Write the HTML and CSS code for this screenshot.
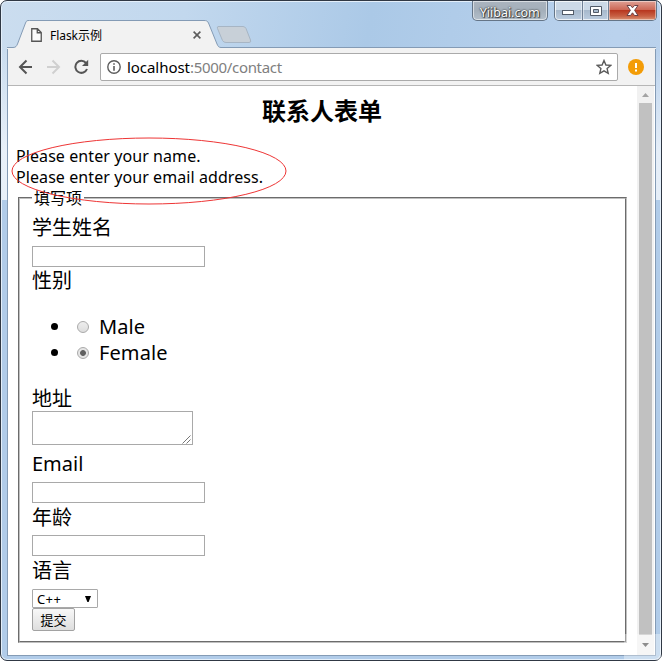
FILE: index.html
```html
<!DOCTYPE html>
<html lang="zh">
<head>
<meta charset="utf-8">
<title>Flask示例</title>
<link rel="stylesheet" href="styles.css">
</head>
<body>
<div class="window">
  <header class="titlebar">
    <svg class="tab-shape" width="649" height="30" viewBox="0 0 649 30">
      <path d="M0 29.500V28.500H6C9 28.500 9.500 27 10.500 25L18.500 4C19.500 1.500 20 1.500 22.500 1.500H197C199.500 1.500 200.500 2 201.500 4L210 25C211 27.500 212 28.500 214 28.500H649V30H0Z" fill="#f2f2f2"/>
      <path d="M0 28.500H6C9 28.500 9.500 27 10.500 25L18.500 4C19.500 1.500 20 1.500 22.500 1.500H197C199.500 1.500 200.500 2 201.500 4L210 25C211 27.500 212 28.500 214 28.500H649" fill="none" stroke="#849bb5"/>
      <path d="M211 7.500H236Q238 7.500 239 9.500L243.500 21Q244.500 23.500 242 23.500H219Q216.500 23.500 215.500 21.500L210.500 9.500Q210 7.500 211 7.500Z" fill="#c8d0d8" stroke="#a7b5c4"/>
    </svg>
    <div class="tab">
      <svg class="page-icon" width="11" height="14" viewBox="0 0 11 14"><path d="M.75.75H6.500L10.250 4.500V13.250H.75ZM6.250.75V4.750H10.250" fill="#fafafa" stroke="#555" stroke-width="1.300"/></svg>
      <span class="tab-title">Flask示例</span>
      <svg class="tab-close" width="8" height="8" viewBox="0 0 8 8"><path d="M.6.6 7.400 7.400M7.400.6.6 7.400" stroke="#5c5c5c" stroke-width="1.600"/></svg>
    </div>
    <div class="caption brand">Yiibai.com</div>
    <div class="caption controls">
      <span class="min"><svg width="14" height="7" viewBox="0 0 14 7"><rect x="1.500" y="1.500" width="11" height="4" fill="#fff" stroke="#525b68"/></svg></span>
      <span class="max"><svg width="12" height="10" viewBox="0 0 12 10"><path d="M.5.5H11.500V9.500H.5ZM3.500 3.500V6.500H8.500V3.500Z" fill="#fff" fill-rule="evenodd" stroke="#525b68"/></svg></span>
      <span class="close"><svg width="13" height="11" viewBox="0 0 13 11"><path d="M1 .5H4.500L6.500 2.800 8.500.5H12L8.600 5.300 12 10.500H8.500L6.500 7.800 4.500 10.500H1L4.400 5.300Z" fill="#fff" stroke="#6a4145"/></svg></span>
    </div>
  </header>
  <div class="client">
    <nav class="toolbar">
      <svg class="nav" width="16" height="16" viewBox="0 0 16 16"><path d="M14 8H2.500M8.500 1.500 2 8 8.500 14.500" fill="none" stroke="#555" stroke-width="2"/></svg>
      <svg class="nav" width="16" height="16" viewBox="0 0 16 16"><path d="M1 8H12.500M6.500 1.500 13 8 6.500 14.500" fill="none" stroke="#d0d0d0" stroke-width="2"/></svg>
      <svg class="nav" width="16" height="16" viewBox="0 0 16 16"><path d="M13 10A6 6 0 1 1 12 4" fill="none" stroke="#555" stroke-width="2"/><path d="M14.200 .8V7H8Z" fill="#555"/></svg>
      <div class="address">
        <svg width="14" height="14" viewBox="0 0 14 14"><circle cx="7" cy="7" r="6.200" fill="none" stroke="#5c5c5c" stroke-width="1.400"/><path d="M6.200 3.200H7.800V4.800H6.200ZM6.200 6H7.800V10.800H6.200Z" fill="#5c5c5c"/></svg>
        <span class="url"><b>localhost</b>:5000/contact</span>
        <svg class="star" width="16" height="16" viewBox="0 0 16 16"><path d="M8 1.500 9.900 6 14.700 6.400 11.100 9.600 12.200 14.300 8 11.800 3.800 14.300 4.900 9.600 1.300 6.400 6.100 6Z" fill="none" stroke="#5a5a5a" stroke-width="1.400"/></svg>
      </div>
      <svg class="alert" width="16" height="16" viewBox="0 0 16 16"><circle cx="8" cy="8" r="8" fill="#f39c07"/><path d="M7 4H9V9H7ZM7 10.500H9V12.500H7Z" fill="#fff"/></svg>
    </nav>
    <div class="viewport">
      <main class="page">
        <h2>联系人表单</h2>
        <div class="messages">Please enter your name.<br>Please enter your email address.</div>
        <form>
          <fieldset>
            <legend>填写项</legend>
            <label class="first">学生姓名</label>
            <input class="text" type="text">
            <label>性别</label>
            <ul>
              <li><input type="radio" name="gender"><span>Male</span></li>
              <li><input type="radio" name="gender" checked><span>Female</span></li>
            </ul>
            <label class="addr">地址</label>
            <div class="area"><textarea></textarea><svg width="9" height="9" viewBox="0 0 9 9"><path d="M.5 8.500 8.500.5M4.500 8.500 8.500 4.500" stroke="#666" stroke-width=".9"/></svg></div>
            <label class="email">Email</label>
            <input class="text" type="text">
            <label class="age">年龄</label>
            <input class="text" type="text">
            <label class="lang">语言</label>
            <div class="select"><span>C++</span><svg width="6" height="6" viewBox="0 0 6 6"><path d="M0 0H6L3.600 6H2.400Z"/></svg></div>
            <button type="button">提交</button>
          </fieldset>
        </form>
      </main>
      <aside class="scrollbar">
        <svg width="17" height="17" viewBox="0 0 17 17"><path d="M5 11 8.500 7 12 11Z" fill="#a3a3a3"/></svg>
        <div class="thumb"></div>
        <svg width="17" height="20" viewBox="0 0 17 20"><path d="M5 8 8.500 12 12 8Z" fill="#505050"/></svg>
      </aside>
    </div>
  </div>
  <svg class="annotation" width="276" height="68" viewBox="0 0 276 68"><ellipse cx="138" cy="34" rx="137" ry="33" fill="none" stroke="#ee3535"/></svg>
  <div class="haze"></div>
</div>
</body>
</html>
```
FILE: styles.css
```css
* { box-sizing: border-box; }
body {
  margin: 0;
  background: #fff;
  color: #000;
  font-family: "Noto Sans", "Noto Sans CJK SC", sans-serif;
}
svg { display: block; flex: none; }
.window {
  position: relative;
  width: 662px;
  height: 661px;
  padding: 0 5px 4px 6px;
  border: 1px solid #303844;
  border-radius: 7px;
  background:
    linear-gradient(rgba(240,245,251,0) 50px, rgba(240,245,251,.8) 150px, rgba(240,245,251,.8) 199px, #b1cce9 199px),
    linear-gradient(100deg, #cbddef 0, #c2d8ee 24%, #abc9e7 48%, #bad2ed 80%, #b8d0ea 100%);
  box-shadow: inset 0 0 0 1px #e4effa;
}
.titlebar { position: relative; display: flex; height: 47px; }
.tab-shape { position: absolute; left: 0; top: 18px; }
.tab {
  position: relative;
  display: flex;
  align-items: center;
  width: 195px;
  height: 29px;
  margin-top: 19px;
  padding-left: 24px;
}
.tab-title { flex: 1; margin-left: 8px; font-size: 12px; letter-spacing: -.05px; }
.caption {
  height: 20px;
  border: 1px solid #657587;
  border-top: 0;
  border-radius: 0 0 5px 5px;
  box-shadow: inset 0 0 0 1px rgba(255,255,255,.55);
}
.brand {
  width: 77px;
  margin-left: 270px;
  background: linear-gradient(#aab4bf, #a4afba 50%, #b3bfca);
  color: #fff;
  font-size: 12.5px;
  line-height: 23px;
  text-align: center;
  text-shadow: 0 0 2px #333, 0 0 1px #333, 1px 1px 1px #333;
}
.controls { display: flex; width: 104px; margin-left: 6px; overflow: hidden; background: linear-gradient(#ccd9e7 45%, #a7b9cc 50%, #bccde0); }
.brand, .controls { position: relative; left: 1px; }
.controls span { display: flex; align-items: center; justify-content: center; width: 28px; border-right: 1px solid #718196; box-shadow: inset 0 0 0 1px rgba(255,255,255,.45); }
.controls .max { width: 27px; }
.controls .close { width: 47px; border: 0; background: linear-gradient(#dfa095, #cd6957 45%, #b83820 50%, #c86144 80%, #db9475); }
.controls .min { padding-top: 4px; }
.client { width: 649px; height: 608px; border: 1px solid #849bb5; border-top: 0; background: #f2f2f2; }
.toolbar { display: flex; align-items: center; height: 38px; padding-left: 10px; border-bottom: 1px solid #b6b6b6; }
.nav { margin-right: 12px; }
.address {
  display: flex;
  align-items: center;
  width: 518px;
  height: 28px;
  margin-left: -2px;
  padding: 0 5px 0 6px;
  border: 1px solid #aaa;
  border-radius: 2px;
  background: #fff;
}
.url { flex: 1; margin-left: 6px; color: #808080; font-size: 15px; letter-spacing: -.31px; }
.url b { color: #000; font-weight: 400; letter-spacing: -.05px; }
.alert { margin-left: 10px; }
.viewport { display: flex; height: 569px; background: #fff; }
.page { width: 629px; padding: 7px 10px 0 8px; }
h2 { height: 34px; margin: 0 0 19px; padding-left: 1px; font-size: 24px; line-height: 36px; text-align: center; }
.messages { height: 41px; font-size: 16px; line-height: 21px; letter-spacing: .08px; }
form { margin-left: 2px; }
fieldset {
  width: 609px;
  height: 456px;
  margin: 0;
  padding: 0 12px;
  border: 2px groove #c0c0c0;
}
legend { height: 21px; padding: 0 2px; font-size: 16px; line-height: 22px; }
label { display: block; height: 27px; font-size: 20px; line-height: 28px; }
.first { height: 38px; line-height: 40px; }
.addr { height: 25px; line-height: 26px; }
.email { height: 37px; line-height: 37px; }
.age { height: 32px; line-height: 29px; }
.lang { height: 33px; line-height: 29px; }
.text { display: block; width: 173px; height: 21px; margin: 0; padding: 1px; border: 1px solid #a9a9a9; }
ul { margin: 20px 0; padding-left: 40px; font-size: 20px; }
li { height: 26px; line-height: 26px; }
li span { margin-left: 10px; letter-spacing: .1px; }
li input {
  appearance: none;
  width: 12px;
  height: 12px;
  margin: 0 0 0 5px;
  vertical-align: 1px;
  border: 1px solid #aaa;
  border-radius: 50%;
  background: linear-gradient(#eee, #ddd);
}
li input:checked { background: radial-gradient(circle, #606060 2.5px, #e5e5e5 3.3px); }
.area { position: relative; width: 161px; height: 34px; }
.area svg { position: absolute; right: 2px; bottom: 1px; }
textarea { display: block; width: 161px; height: 34px; border: 1px solid #a9a9a9; resize: none; }
.select {
  display: flex;
  align-items: center;
  justify-content: space-between;
  width: 66px;
  height: 19px;
  padding: 0 6px 0 4px;
  border: 1px solid #a9a9a9;
  border-radius: 1px;
  font-size: 13px;
  letter-spacing: .4px;
}
button {
  display: block;
  width: 43px;
  height: 23px;
  margin: 0;
  padding: 0;
  border: 1px solid #a2a2a2;
  border-radius: 2px;
  background: linear-gradient(#f8f8f8, #dedede);
  color: #000;
  font: 13px "Noto Sans", "Noto Sans CJK SC", sans-serif;
}
.scrollbar { display: flex; flex-direction: column; width: 17px; background: #f1f1f1; }
.thumb { flex: 1; margin: 0 2px; background: #c1c1c1; }
.annotation { position: absolute; left: 10px; top: 136px; }
.haze { position: absolute; right: 0; bottom: 0; width: 37px; height: 26px; background: rgba(255,255,255,.35); }
```
